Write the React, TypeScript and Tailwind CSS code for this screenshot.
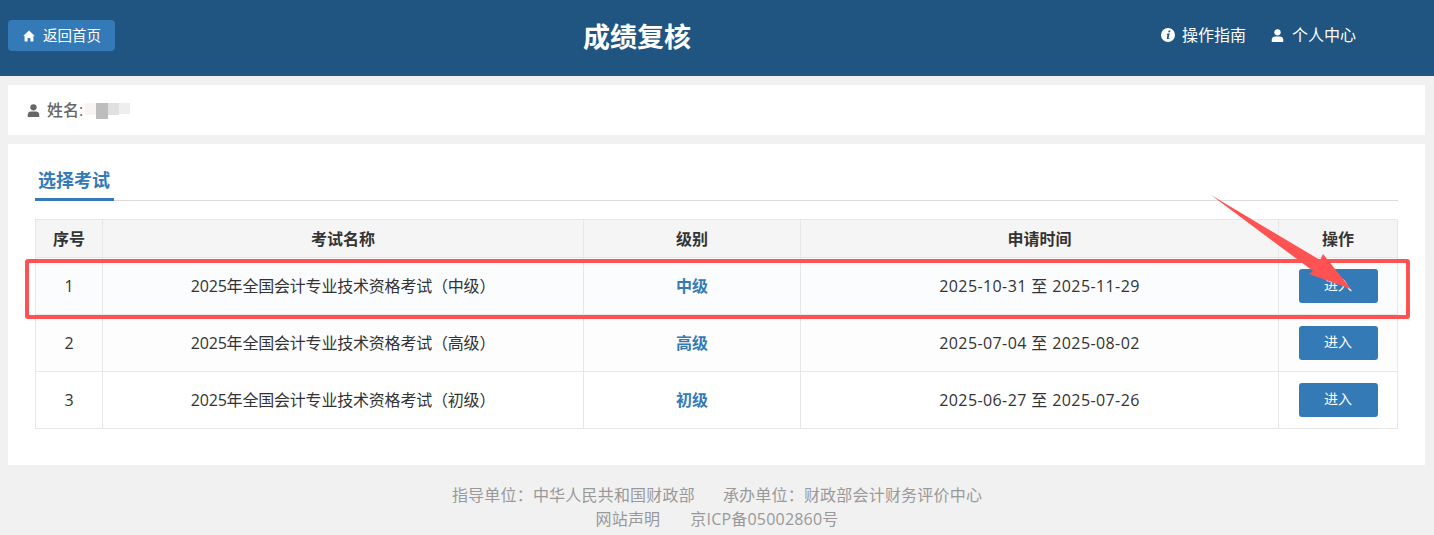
const exams = [
  { id: 1, name: "2025年全国会计专业技术资格考试（中级）", level: "中级", time: "2025-10-31 至 2025-11-29" },
  { id: 2, name: "2025年全国会计专业技术资格考试（高级）", level: "高级", time: "2025-07-04 至 2025-08-02" },
  { id: 3, name: "2025年全国会计专业技术资格考试（初级）", level: "初级", time: "2025-06-27 至 2025-07-26" },
];

function UserGlyph({ className }: { className: string }) {
  return (
    <svg viewBox="0 0 14 14" className={className} fill="currentColor">
      <circle cx="7" cy="3.6" r="3.4" />
      <path d="M0.8 14 V11.6 C0.8 9.4 2.4 8.1 4.4 8.1 H9.6 C11.6 8.1 13.2 9.4 13.2 11.6 V14 Z" />
    </svg>
  );
}

function HomeGlyph() {
  return (
    <svg viewBox="0 0 12 12" className="size-3" fill="currentColor">
      <path fillRule="evenodd" d="M6 0.6 L11.6 5.8 L10.4 6.2 V11.6 H7.4 V8 H4.6 V11.6 H1.6 V6.2 L0.4 5.8 Z" />
    </svg>
  );
}

function InfoGlyph() {
  return (
    <svg viewBox="0 0 14 14" className="size-[14px]" fill="currentColor">
      <path
        fillRule="evenodd"
        d="M7 0a7 7 0 1 0 0 14a7 7 0 0 0 0-14Z M7.6 2.4h1.9l-.4 1.9H7.2Z M6.6 5.4h2.1l-1.1 4.5c-.1.4.3.4.9.1l-.1.8c-.9.6-2.8.8-2.6-.7l.7-3.3c-.4-.1-.6-.1-.8 0l.1-.6c.3-.4 1-.8 .8-.8Z"
      />
    </svg>
  );
}

export default function App() {
  return (
    <div className="relative min-h-[535px] bg-[#f1f1f1] font-['Open_Sans','Noto_Sans_CJK_SC',sans-serif] overflow-hidden">
      {/* top bar */}
      <header className="h-[76px] bg-[#205581] relative flex items-start justify-between pl-2 pr-[78px] text-white">
        <button className="mt-5 h-[31px] w-[107px] rounded bg-[#337ab7] flex items-center gap-2 pl-[15px] text-[14.5px]">
          <HomeGlyph />
          返回首页
        </button>
        <h1 className="absolute left-0 right-[160px] top-[17px] text-center text-[27px] leading-10 font-bold">成绩复核</h1>
        <nav className="mt-[23px] flex items-center gap-[25px] text-base leading-6">
          <span className="flex items-center gap-[7px]">
            <InfoGlyph />
            操作指南
          </span>
          <span className="flex items-center gap-[8px]">
            <UserGlyph className="size-[13px]" />
            个人中心
          </span>
        </nav>
      </header>

      <main className="pl-2 pr-[9px] pt-[9px]">
        <div className="h-[50px] bg-white flex items-center pl-[19px] gap-[7px] text-[#666] text-base font-medium">
          <UserGlyph className="size-[13px]" />
          <span>姓名:</span>
          {/* masked name */}
          <span className="flex -ml-[5px] mt-[2px] items-start">
            <span className="h-[12px] w-[11px] bg-[#f9f4f1]" />
            <span className="h-[16px] w-[12px] bg-[#bdbdbd]" />
            <span className="h-[12px] w-[11px] bg-[#e0e0e0]" />
            <span className="h-[11px] w-[11px] bg-[#eeeeee]" />
          </span>
        </div>

        <section className="mt-[9px] h-[321px] bg-white px-[27px] pt-[21px]">
          <div className="h-[36px] border-b border-[#dcdcdc]">
            <span className="inline-block h-[36px] w-[79px] border-b-[3px] border-[#337ab7] pl-[3px] text-[#337ab7] text-lg leading-[31px] font-bold">选择考试</span>
          </div>

          <table className="mt-[18px] w-[1362px] table-fixed border-collapse text-base text-[#333]">
            <colgroup>
              <col className="w-[67px]" />
              <col className="w-[481px]" />
              <col className="w-[217px]" />
              <col className="w-[478px]" />
              <col className="w-[119px]" />
            </colgroup>
            <thead>
              <tr className="h-[38px] bg-[#f5f5f5]">
                {["序号", "考试名称", "级别", "申请时间", "操作"].map((h) => (
                  <th key={h} className="border border-[#e7e7e7] font-bold text-[#333] text-base">{h}</th>
                ))}
              </tr>
            </thead>
            <tbody>
              {exams.map((e) => (
                <tr key={e.id} className="h-[57px] even:bg-[#fdfdfd] first:bg-[#fbfcfe]">
                  <td className="border border-[#e7e7e7] text-center">{e.id}</td>
                  <td className="border border-[#e7e7e7] text-center tracking-[-0.2px]">{e.name}</td>
                  <td className="border border-[#e7e7e7] text-center text-[#337ab7] font-bold text-base">{e.level}</td>
                  <td className="border border-[#e7e7e7] text-center tracking-[0.4px]">{e.time}</td>
                  <td className="border border-[#e7e7e7] text-center">
                    <button className="h-[34px] w-[79px] rounded-[3px] bg-[#337ab7] pb-[2px] text-white text-sm">进入</button>
                  </td>
                </tr>
              ))}
            </tbody>
          </table>
        </section>
      </main>

      <footer className="pt-[18px] text-center text-base leading-6 tracking-[0.2px] text-[#999]">
        <p>指导单位：中华人民共和国财政部<span className="ml-7">承办单位：财政部会计财务评价中心</span></p>
        <p>网站声明<span className="ml-[30px]">京ICP备05002860号</span></p>
      </footer>

      {/* red annotation drawn over the screenshot */}
      <div className="absolute left-[25px] top-[259px] h-[60px] w-[1385px] rounded-[3px] border-[4px] border-[#ff5252]" />
      <svg className="absolute left-[1200px] top-[190px] h-[110px] w-[170px]" viewBox="0 0 170 110" fill="#ff5252">
        <polygon points="11,5 120,70 123,64 151,99 109,84 113,81" />
      </svg>
    </div>
  );
}
